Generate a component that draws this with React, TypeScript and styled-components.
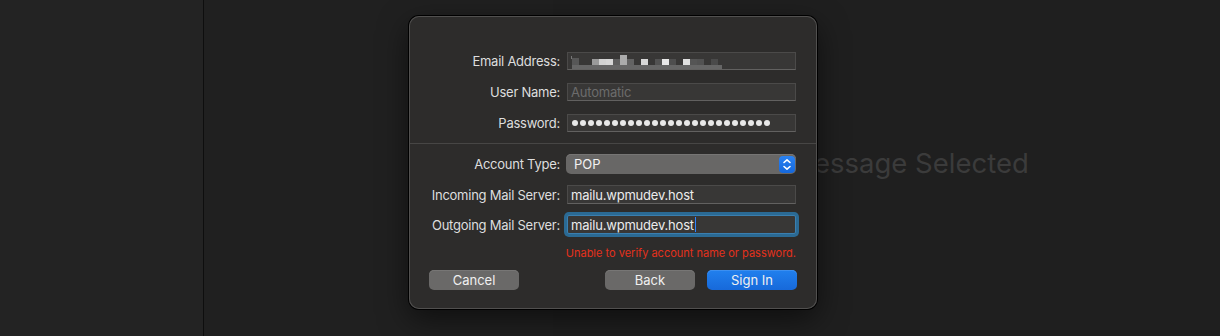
import React from "react";
import styled, {createGlobalStyle} from "styled-components";

const GlobalStyle = createGlobalStyle`
	html, body {
		margin: 0;
		padding: 0;
		background: #1f1f1f;
	}
	body {
		font-family: Inter, "Liberation Sans", sans-serif;
		-webkit-font-smoothing: antialiased;
	}
`;

// blurred-out email address, drawn as a mosaic
const mosaic: [number, number, number, number, string][] = [
	[0, 1, 1, 3, "#777"],
	[1, 3, 7, 8, "#575757"],
	[1, 10, 150, 4, "#666"],
	[21, 4, 7, 6, "#9a9a9a"],
	[28, 4, 7, 6, "#d2d2d2"],
	[35, 4, 7, 6, "#d6d6d6"],
	[42, 4, 7, 6, "#5e5e5e"],
	[49, 0, 7, 10, "#ababab"],
	[56, 4, 7, 6, "#636363"],
	[70, 4, 7, 6, "#d8d8d8"],
	[84, 4, 7, 6, "#525252"],
	[91, 4, 7, 6, "#e8e8e8"],
	[98, 4, 7, 6, "#4e4e4e"],
	[112, 4, 7, 6, "#e0e0e0"],
	[119, 4, 7, 6, "#555"],
	[126, 4, 7, 6, "#525252"],
	[140, 4, 7, 6, "#4a4a4a"],
];

export default function App() {
	return (
		<>
			<GlobalStyle />
			<Window>
				<Sidebar />
				<ListPane />
				<Viewer>No Message Selected</Viewer>
				<Sheet>
					<Form>
						<Label>Email Address:</Label>
						<Field>
							<svg width="152" height="14" style={{marginTop: 2}}>
								{mosaic.map(([x, y, w, h, c], i) => (
									<rect key={i} x={x} y={y} width={w} height={h} fill={c} />
								))}
							</svg>
						</Field>
						<Label>User Name:</Label>
						<Field $placeholder>Automatic</Field>
						<Label>Password:</Label>
						<Field>
							<Dots>
								{Array.from({length: 25}).map((_, i) => (
									<Dot key={i} />
								))}
							</Dots>
						</Field>
					</Form>
					<Separator />
					<Form $second>
						<Label>Account Type:</Label>
						<Popup>
							POP
							<Stepper>
								<svg width="10" height="13" viewBox="0 0 10 13" fill="none" stroke="#fff" strokeWidth="1.6" strokeLinecap="round" strokeLinejoin="round">
									<path d="M2 4.5 L5 1.8 L8 4.5" />
									<path d="M2 8.5 L5 11.2 L8 8.5" />
								</svg>
							</Stepper>
						</Popup>
						<Label>Incoming Mail Server:</Label>
						<Field>mailu.wpmudev.host</Field>
						<Label>Outgoing Mail Server:</Label>
						<Field $focused>
							mailu.wpmudev.host
							<Caret />
						</Field>
					</Form>
					<ErrorText>Unable to verify account name or password.</ErrorText>
					<Buttons>
						<Button>Cancel</Button>
						<Spacer />
						<Button>Back</Button>
						<Button $primary>Sign In</Button>
					</Buttons>
				</Sheet>
			</Window>
		</>
	);
}

const Window = styled.div`
	position: relative;
	display: flex;
	height: 336px;
	overflow: hidden;
`;

const Sidebar = styled.div`
	width: 203px;
	flex: 0 0 auto;
	background: #232323;
	border-right: 1px solid #0e0e0e;
`;

const ListPane = styled.div`
	width: 349px;
	flex: 0 0 auto;
	background: #202020;
`;

const Viewer = styled.div`
	flex: 1;
	display: flex;
	align-items: center;
	justify-content: center;
	padding-bottom: 10px;
	background: #1f1f1f;
	color: #3b3b3b;
	font-size: 27.5px;
	white-space: nowrap;
`;

const Sheet = styled.div`
	position: absolute;
	left: 409px;
	top: 16px;
	width: 408px;
	height: 293px;
	box-sizing: border-box;
	padding-top: 36px;
	display: flex;
	flex-direction: column;
	background: #2d2c2b;
	border-radius: 10px;
	box-shadow: 0 0 0 1px #000, inset 0 0 0 1px #51504f, 0 10px 30px rgba(0, 0, 0, 0.55);
`;

const Form = styled.div<{$second?: boolean}>`
	display: grid;
	grid-template-columns: minmax(0, 1fr) 229px;
	grid-auto-rows: ${(p) => (p.$second ? "auto" : "18px")};
	column-gap: 7px;
	row-gap: ${(p) => (p.$second ? "11px" : "13px")};
	padding: 0 21px 0 20px;
`;

const Label = styled.div`
	align-self: center;
	text-align: right;
	color: #dedede;
	font-size: 13px;
	letter-spacing: -0.25px;
	white-space: nowrap;
`;

const Field = styled.div<{$placeholder?: boolean; $focused?: boolean}>`
	height: 19px;
	box-sizing: border-box;
	display: flex;
	align-items: center;
	padding: 0 3px;
	background: #383736;
	border: 1px solid #4b4a49;
	border-bottom-color: #626160;
	color: ${(p) => (p.$placeholder ? "#6c6c6c" : "#ececec")};
	font-size: 13px;
	letter-spacing: -0.2px;
	box-shadow: ${(p) => (p.$focused ? "0 0 0 3px #2b6a94" : "none")};
	border-color: ${(p) => (p.$focused ? "#3a7fb0" : "")};
	border-radius: ${(p) => (p.$focused ? "2px" : "0")};
	${Form}:first-child & {
		height: 18px;
	}
`;

const Dots = styled.div`
	display: flex;
	gap: 2px;
	padding-left: 1px;
`;

const Dot = styled.span`
	width: 6px;
	height: 6px;
	border-radius: 50%;
	background: #e8e8e8;
`;

const Caret = styled.span`
	width: 1px;
	height: 15px;
	margin-left: 1px;
	background: #2f86ff;
`;

const Separator = styled.div`
	height: 1px;
	margin: 11px 1px 10px;
	background: #474645;
`;

const Popup = styled.div`
	height: 20px;
	margin-left: -1px;
	box-sizing: border-box;
	display: flex;
	align-items: center;
	justify-content: space-between;
	padding: 0 1px 0 8px;
	background: #686766;
	border-radius: 5px;
	box-shadow: inset 0 1px 0 #767574;
	color: #f2f2f2;
	font-size: 13px;
`;

const Stepper = styled.div`
	width: 16px;
	height: 17px;
	display: flex;
	align-items: center;
	justify-content: center;
	background: linear-gradient(#2a82f2, #1568dc);
	border-radius: 4px;
`;

const ErrorText = styled.div`
	margin-top: 12px;
	padding-right: 21px;
	text-align: right;
	color: #e3311c;
	font-size: 11px;
	line-height: 14px;
`;

const Buttons = styled.div`
	display: flex;
	gap: 12px;
	margin-top: 10px;
	padding: 0 20px;
`;

const Spacer = styled.div`
	flex: 1;
`;

const Button = styled.div<{$primary?: boolean}>`
	width: 90px;
	height: 20px;
	display: flex;
	align-items: center;
	justify-content: center;
	border-radius: 5px;
	background: ${(p) => (p.$primary ? "linear-gradient(#2180ee, #1769da)" : "#6a6968")};
	box-shadow: inset 0 1px 0 ${(p) => (p.$primary ? "#3c8ff0" : "#777675")};
	color: #f0f0f0;
	font-size: 13px;
`;
